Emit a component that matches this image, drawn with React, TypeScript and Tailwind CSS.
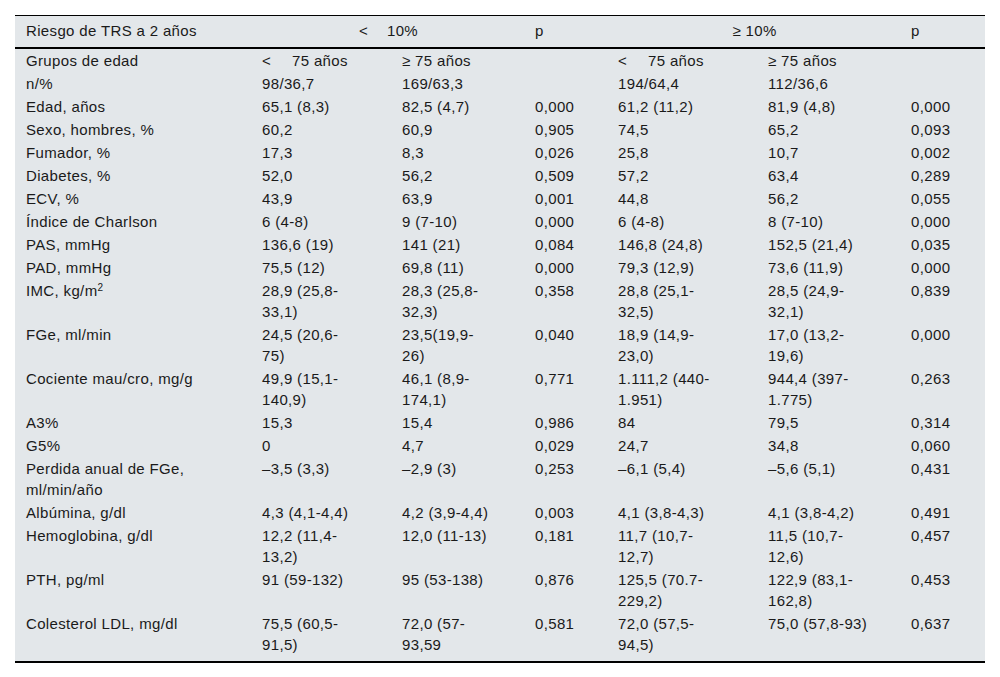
import type { ReactNode } from 'react'

interface Row {
  label: ReactNode
  cells: ReactNode[]
}

// "<" seguido de un hueco ancho, como en la tabla original
function Lt({ children }: { children: ReactNode }) {
  return (
    <>
      <span className="inline-block w-[30px]">&lt;</span>
      {children}
    </>
  )
}

// los cortes de línea van marcados con "|"
function Cell({ value }: { value: ReactNode }) {
  if (typeof value !== 'string' || !value.includes('|'))
    return <>{value}</>
  const parts = value.split('|')
  return (
    <>
      {parts.map((p, i) => (
        <span key={i}>
          {p}
          {i < parts.length - 1 && <br />}
        </span>
      ))}
    </>
  )
}

const ROWS: Row[] = [
  { label: 'Grupos de edad', cells: [<Lt key="a">75 años</Lt>, '≥ 75 años', '', <Lt key="b">75 años</Lt>, '≥ 75 años', ''] },
  { label: 'n/%', cells: ['98/36,7', '169/63,3', '', '194/64,4', '112/36,6', ''] },
  { label: 'Edad, años', cells: ['65,1 (8,3)', '82,5 (4,7)', '0,000', '61,2 (11,2)', '81,9 (4,8)', '0,000'] },
  { label: 'Sexo, hombres, %', cells: ['60,2', '60,9', '0,905', '74,5', '65,2', '0,093'] },
  { label: 'Fumador, %', cells: ['17,3', '8,3', '0,026', '25,8', '10,7', '0,002'] },
  { label: 'Diabetes, %', cells: ['52,0', '56,2', '0,509', '57,2', '63,4', '0,289'] },
  { label: 'ECV, %', cells: ['43,9', '63,9', '0,001', '44,8', '56,2', '0,055'] },
  { label: 'Índice de Charlson', cells: ['6 (4-8)', '9 (7-10)', '0,000', '6 (4-8)', '8 (7-10)', '0,000'] },
  { label: 'PAS, mmHg', cells: ['136,6 (19)', '141 (21)', '0,084', '146,8 (24,8)', '152,5 (21,4)', '0,035'] },
  { label: 'PAD, mmHg', cells: ['75,5 (12)', '69,8 (11)', '0,000', '79,3 (12,9)', '73,6 (11,9)', '0,000'] },
  {
    label: <>IMC, kg/m<sup className="text-[10px]">2</sup></>,
    cells: ['28,9 (25,8-|33,1)', '28,3 (25,8-|32,3)', '0,358', '28,8 (25,1-|32,5)', '28,5 (24,9-|32,1)', '0,839'],
  },
  { label: 'FGe, ml/min', cells: ['24,5 (20,6-|75)', '23,5(19,9-|26)', '0,040', '18,9 (14,9-|23,0)', '17,0 (13,2-|19,6)', '0,000'] },
  { label: 'Cociente mau/cro, mg/g', cells: ['49,9 (15,1-|140,9)', '46,1 (8,9-|174,1)', '0,771', '1.111,2 (440-|1.951)', '944,4 (397-|1.775)', '0,263'] },
  { label: 'A3%', cells: ['15,3', '15,4', '0,986', '84', '79,5', '0,314'] },
  { label: 'G5%', cells: ['0', '4,7', '0,029', '24,7', '34,8', '0,060'] },
  { label: 'Perdida anual de FGe,|ml/min/año', cells: ['–3,5 (3,3)', '–2,9 (3)', '0,253', '–6,1 (5,4)', '–5,6 (5,1)', '0,431'] },
  { label: 'Albúmina, g/dl', cells: ['4,3 (4,1-4,4)', '4,2 (3,9-4,4)', '0,003', '4,1 (3,8-4,3)', '4,1 (3,8-4,2)', '0,491'] },
  { label: 'Hemoglobina, g/dl', cells: ['12,2 (11,4-|13,2)', '12,0 (11-13)', '0,181', '11,7 (10,7-|12,7)', '11,5 (10,7-|12,6)', '0,457'] },
  { label: 'PTH, pg/ml', cells: ['91 (59-132)', '95 (53-138)', '0,876', '125,5 (70.7-|229,2)', '122,9 (83,1-|162,8)', '0,453'] },
  { label: 'Colesterol LDL, mg/dl', cells: ['75,5 (60,5-|91,5)', '72,0 (57-|93,59', '0,581', '72,0 (57,5-|94,5)', '75,0 (57,8-93)', '0,637'] },
]

const COL_WIDTHS = ['w-[237px]', 'w-[140px]', 'w-[133px]', 'w-[83px]', 'w-[150px]', 'w-[143px]', 'w-[84px]']

export default function App() {
  return (
    <div className="min-h-[677px] bg-white pt-[15px] px-[15px] font-['Liberation_Sans',Arial,sans-serif] text-[15px] tracking-[0.35px] text-[#1a1a1a]">
      <table className="w-[970px] table-fixed border-collapse bg-[#e3e7ea]">
        <colgroup>
          {COL_WIDTHS.map(w => (
            <col key={w} className={w} />
          ))}
        </colgroup>
        <thead>
          <tr className="border-t border-t-black border-b-2 border-b-black">
            <th className="h-[32px] pl-[11px] text-left font-normal">Riesgo de TRS a 2 años</th>
            <th colSpan={2} className="text-center font-normal">
              <span className="inline-block w-[28px] text-left">&lt;</span>
              10%
            </th>
            <th className="pl-[10px] text-left font-normal">p</th>
            <th colSpan={2} className="text-center font-normal">≥ 10%</th>
            <th className="pl-[10px] text-left font-normal">p</th>
          </tr>
        </thead>
        <tbody className="border-b-2 border-b-black">
          {ROWS.map((row, i) => (
            <tr key={i} className="align-top leading-[21px]">
              <td className="py-px pl-[11px] pr-2"><Cell value={row.label} /></td>
              {row.cells.map((c, j) => (
                <td key={j} className="py-px pl-[10px] pr-1 whitespace-nowrap"><Cell value={c} /></td>
              ))}
            </tr>
          ))}
          <tr><td colSpan={7} className="h-[6px]" /></tr>
        </tbody>
      </table>
    </div>
  )
}
